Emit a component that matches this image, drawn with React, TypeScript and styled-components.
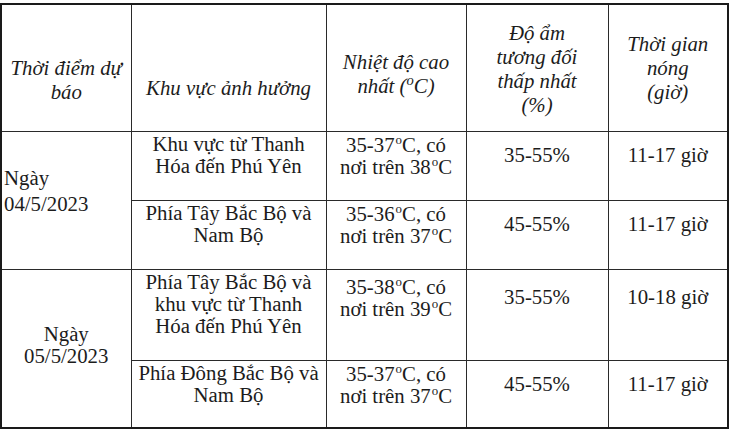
import styled, { createGlobalStyle } from "styled-components";

const GlobalStyle = createGlobalStyle`
    html, body {
        margin: 0;
        padding: 0;
        background: #ffffff;
    }
    body {
        font-family: "Liberation Serif", "Times New Roman", serif;
        color: #1c1c1c;
    }
`;

const Page = styled.div`
    padding-top: 3px;
    width: 730px;
`;

const Table = styled.table`
    border-collapse: collapse;
    table-layout: fixed;
    width: 727px;
    font-size: 20.8px;
    line-height: 22px;
    border: 2px solid #1a1a1a;
`;

const HeadRow = styled.tr`
    height: 127px;
`;

const BodyRow = styled.tr<{ $h: number }>`
    height: ${(p) => p.$h}px;
`;

const HeadCell = styled.th<{ $shift?: number }>`
    font-weight: normal;
    font-style: italic;
    text-align: center;
    vertical-align: middle;
    padding: ${(p) => (p.$shift || 0) + 2}px 4px 2px;
    border: 1px solid #2a2a2a;
    line-height: 24px;
`;

const DateCell = styled.td<{ $left?: boolean; $lh: number }>`
    text-align: ${(p) => (p.$left ? "left" : "center")};
    vertical-align: middle;
    padding: ${(p) => (p.$left ? "0 0 18px 2px" : "0 4px 6px")};
    line-height: ${(p) => p.$lh}px;
    border: 1px solid #2a2a2a;
`;

const Cell = styled.td<{ $offset?: number }>`
    text-align: center;
    vertical-align: top;
    padding: ${(p) => 1 + (p.$offset || 0)}px 2px 2px;
    border: 1px solid #2a2a2a;
`;

const Deg = styled.span`
    font-size: 0.62em;
    line-height: 0;
    position: relative;
    top: -0.6em;
    margin-left: 1px;
`;

const HeadDeg = styled.span`
    font-size: 0.7em;
    line-height: 0;
    position: relative;
    top: -0.5em;
`;

const Temp = ({ a, b }: { a: string; b: string }) => (
    <>
        {a}
        <Deg>o</Deg>C, có
        <br />
        nơi trên {b}
        <Deg>o</Deg>C
    </>
);

const rows = [
    {
        h: 69,
        area: ["Khu vực từ Thanh", "Hóa đến Phú Yên"],
        temp: ["35-37", "38"],
        hum: "35-55%",
        time: "11-17 giờ",
    },
    {
        h: 69,
        area: ["Phía Tây Bắc Bộ và", "Nam Bộ"],
        temp: ["35-36", "37"],
        hum: "45-55%",
        time: "11-17 giờ",
    },
    {
        h: 91,
        area: ["Phía Tây Bắc Bộ và", "khu vực từ Thanh", "Hóa đến Phú Yên"],
        temp: ["35-38", "39"],
        hum: "35-55%",
        time: "10-18 giờ",
    },
    {
        h: 68,
        area: ["Phía Đông Bắc Bộ và", "Nam Bộ"],
        temp: ["35-37", "37"],
        hum: "45-55%",
        time: "11-17 giờ",
    },
];

const Area = ({ lines }: { lines: string[] }) => (
    <>
        {lines.map((l, i) => (
            <span key={i}>
                {i > 0 && <br />}
                {l}
            </span>
        ))}
    </>
);

const App = () => {
    return (
        <Page>
            <GlobalStyle />
            <Table>
                <colgroup>
                    <col style={{ width: 130 }} />
                    <col style={{ width: 195 }} />
                    <col style={{ width: 140 }} />
                    <col style={{ width: 142 }} />
                    <col style={{ width: 120 }} />
                </colgroup>
                <thead>
                    <HeadRow>
                        <HeadCell $shift={24}>
                            Thời điểm dự
                            <br />
                            báo
                        </HeadCell>
                        <HeadCell $shift={40}>Khu vực ảnh hưởng</HeadCell>
                        <HeadCell $shift={12}>
                            Nhiệt độ cao
                            <br />
                            nhất (<HeadDeg>o</HeadDeg>C)
                        </HeadCell>
                        <HeadCell $shift={2}>
                            Độ ẩm
                            <br />
                            tương đối
                            <br />
                            thấp nhất
                            <br />
                            (%)
                        </HeadCell>
                        <HeadCell>
                            Thời gian
                            <br />
                            nóng
                            <br />
                            (giờ)
                        </HeadCell>
                    </HeadRow>
                </thead>
                <tbody>
                    {rows.map((r, i) => (
                        <BodyRow key={i} $h={r.h}>
                            {i === 0 && (
                                <DateCell rowSpan={2} $left $lh={26}>
                                    Ngày
                                    <br />
                                    04/5/2023
                                </DateCell>
                            )}
                            {i === 2 && (
                                <DateCell rowSpan={2} $lh={22}>
                                    Ngày
                                    <br />
                                    05/5/2023
                                </DateCell>
                            )}
                            <Cell>
                                <Area lines={r.area} />
                            </Cell>
                            <Cell $offset={i === 2 ? 5 : 1}>
                                <Temp a={r.temp[0]} b={r.temp[1]} />
                            </Cell>
                            <Cell $offset={i === 2 ? 15 : 11}>{r.hum}</Cell>
                            <Cell $offset={i === 2 ? 15 : 11}>{r.time}</Cell>
                        </BodyRow>
                    ))}
                </tbody>
            </Table>
        </Page>
    );
};

export default App;
